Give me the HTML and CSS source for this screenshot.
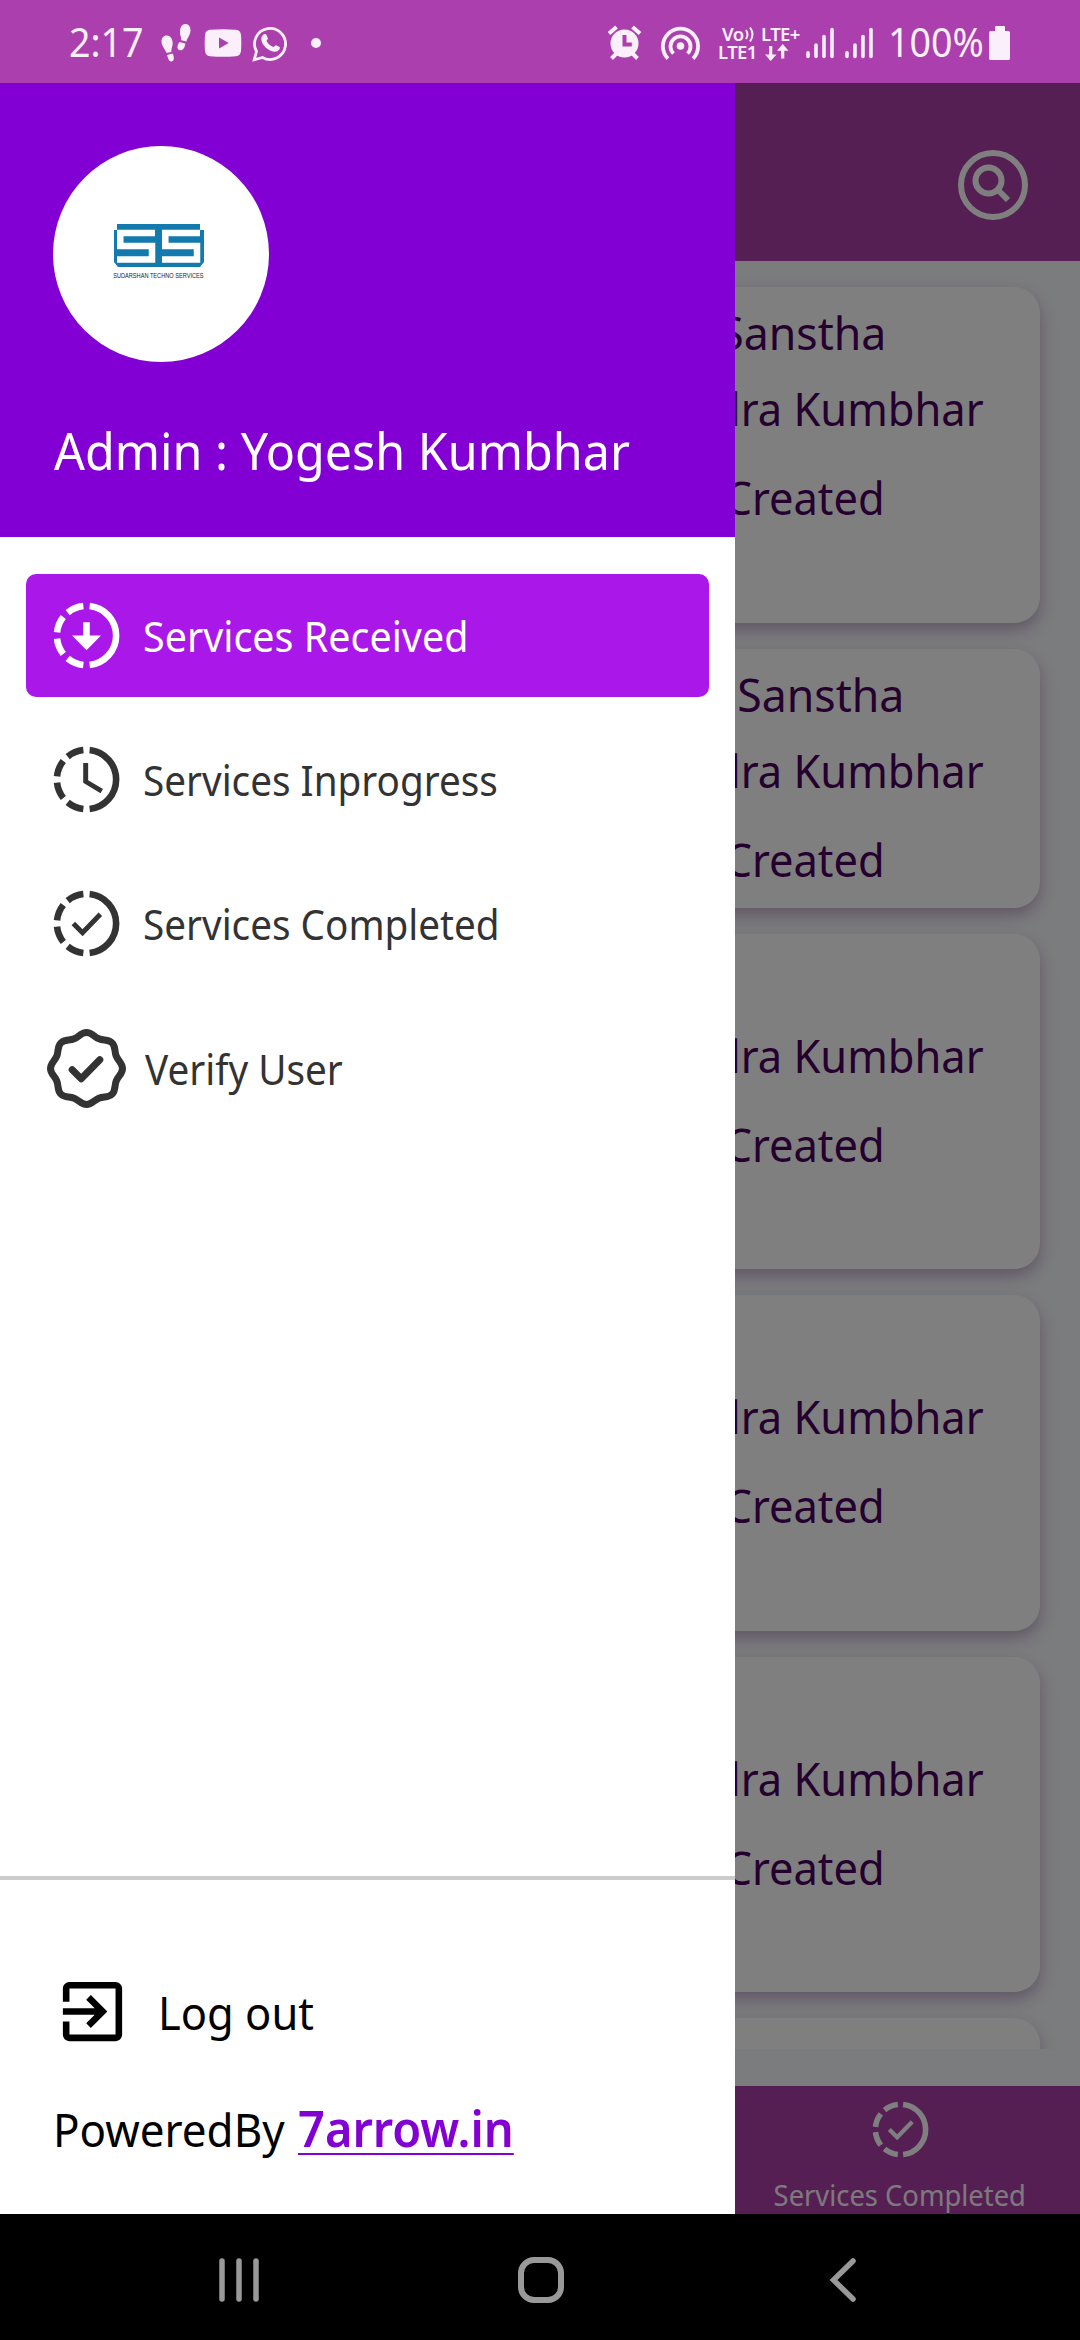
FILE: index.html
```html
<!DOCTYPE html>
<html lang="en">
<head>
<meta charset="utf-8">
<title>Services</title>
<link rel="stylesheet" href="styles.css">
</head>
<body>
<svg class="defs" width="0" height="0">
  <symbol id="ring" viewBox="0 0 24 24">
    <path fill="none" stroke="currentColor" stroke-width="2" d="M12.95 3.05A9 9 0 0 1 12.95 20.95M11.05 3.05A9 9 0 0 0 6.28 5.05M4.95 6.4A9 9 0 0 0 3.05 11.05M3.05 12.95A9 9 0 0 0 4.95 17.6M6.28 18.95A9 9 0 0 0 11.05 20.95"/>
  </symbol>
  <symbol id="done" viewBox="0 0 24 24">
    <use href="#ring"/>
    <path fill="none" stroke="currentColor" stroke-width="1.5" d="M8 12l2.8 2.8L16.2 9.2"/>
  </symbol>
</svg>

<header class="status">
  <span class="clock">2:17</span>
  <svg class="steps" viewBox="0 0 30 40" width="30" height="40" fill="currentColor">
    <path d="M5.500 12.500c4 0 6 3.500 6.200 7.500.1 3.500-1.500 5-1.400 9L5.500 30C4.500 27 .5 23 .5 18.500c0-3.500 2-6 5-6zM6 32l5.500-1.500c1.800 2.500 2 7.500-.8 8C7.800 39 7 35 6 32zM24.500 1c3.500 0 5 3 5 6.500 0 4.500-3.500 7.500-4 11l-5.300-1.300c.3-3.500-1.500-5-1.200-9C19.300 4 21 1 24.500 1zM18.500 19l5.800 1.500c-.3 3.500-2 7-5 6.800-4-.3-3.300-5.300-.8-8.300z"/>
  </svg>
  <svg class="video" viewBox="0 0 38 28" width="38" height="28">
    <path fill="currentColor" fill-rule="evenodd" d="M6 .7Q19-.3 32 .7 36.500 1 37 6q.6 8 0 16-.5 5-5 5.300-13 1-26 0Q1.500 27 1 22 .4 14 1 6 1.500 1 6 .7zM15 8.500v11L24.700 14z"/>
  </svg>
  <svg class="chat" viewBox="0 0 36 38" width="36" height="38">
    <path fill="none" stroke="currentColor" stroke-width="2.800" d="M2.200 35.800l2.300-8.300A15.500 15.500 0 1 1 10.500 33.500z"/>
    <path fill="currentColor" d="M11.500 10.500c1-.8 2.500-.5 3 .5l1.400 3.200c.3.800-1.400 2-1.300 2.700 1.400 3 4 5 6.800 6.100.8 0 2-2 2.700-1.700l3.500 1.700c1.300 1.500-1.500 5-5.100 4.700C15.500 27 9.500 20.500 9.300 15c0-2 1-3.700 2.200-4.500z"/>
  </svg>
  <span class="dot"></span>
  <div class="status-right">
    <svg class="alarm" viewBox="0 0 35 36" width="35" height="36">
      <path stroke="currentColor" stroke-width="4" d="M2 8.500l7.500-6.500M33 8.500L25.500 2M4.500 33.500l6-6M30.500 33.500l-6-6"/>
      <path fill="currentColor" fill-rule="evenodd" d="M17.500 4.500a14 14 0 1 1 0 28 14 14 0 0 1 0-28zM15.500 10v11.500h9.300v-4h-5.300V10z"/>
    </svg>
    <svg class="hotspot" viewBox="0 0 39 36" width="39" height="36" fill="none" stroke="currentColor" stroke-width="3.800">
      <circle cx="19.500" cy="21" r="3.800" fill="currentColor" stroke="none"/>
      <path d="M7 33.700A17.600 17.600 0 1 1 32 33.700M12.500 28.500A10 10 0 1 1 26.500 28.500"/>
    </svg>
    <div class="network">
      <div class="sim">
        <span class="volte">Vo<svg viewBox="0 0 9 18" width="9" height="18" fill="none" stroke="currentColor" stroke-width="2"><path d="M1 5q3 4.500 0 9M5 2.500q5 6.500 0 14"/></svg></span>
        <span>LTE1</span>
      </div>
      <div class="sim">
        <span>LTE+</span>
        <svg class="traffic" viewBox="0 0 24 17" width="24" height="17" fill="currentColor"><path d="M4 2h3.300v8.500h4.200L5.700 17 0 10.500h4zM16 14.500h3.300V6.700h4.200L17.700 0 12 6.700h4z"/></svg>
      </div>
    </div>
    <svg class="signal" viewBox="0 0 28 32" width="28" height="32" stroke="currentColor" stroke-width="3.600" stroke-linecap="round">
      <path d="M2 25.800v3.700M10 18v11.500M18 9.500v20M26 2.500v27"/>
    </svg>
    <svg class="signal second" viewBox="0 0 28 32" width="28" height="32" stroke="currentColor" stroke-width="3.600" stroke-linecap="round">
      <path d="M2 25.800v3.700M10 18v11.500M18 9.500v20M26 2.500v27"/>
    </svg>
    <span class="percent">100%</span>
    <svg class="battery" viewBox="0 0 21 34" width="21" height="34" fill="currentColor">
      <path d="M7 0h8q1 0 1 1v4h3.500Q21 5 21 6.500v26q0 1.500-1.500 1.500h-18Q0 34 0 32.500v-26Q0 5 1.500 5H6V1q0-1 1-1z"/>
    </svg>
  </div>
</header>

<main class="stage">
  <section class="app">
    <div class="appbar">
      <svg viewBox="0 0 70 70" width="70" height="70" fill="none" stroke="currentColor" stroke-width="6">
        <circle cx="35" cy="35" r="32"/>
        <circle cx="30.500" cy="30.500" r="13"/>
        <path d="M39.500 39.500l10.500 10.500"/>
      </svg>
    </div>
    <div class="list">
      <article class="card">
        <p class="org">Sanstha</p><p class="name">dra Kumbhar</p><p class="state">Created</p>
      </article>
      <article class="card short">
        <p class="org wide">Sanstha</p><p class="name">dra Kumbhar</p><p class="state">Created</p>
      </article>
      <article class="card">
        <p class="org"></p><p class="name">dra Kumbhar</p><p class="state">Created</p>
      </article>
      <article class="card">
        <p class="org"></p><p class="name">dra Kumbhar</p><p class="state">Created</p>
      </article>
      <article class="card">
        <p class="org"></p><p class="name">dra Kumbhar</p><p class="state">Created</p>
      </article>
      <article class="card"></article>
    </div>
    <nav class="tabs">
      <div class="tab">
        <svg width="67" height="67"><use href="#done"/></svg>
        <span>Services Completed</span>
      </div>
    </nav>
  </section>
  <div class="scrim"></div>

  <aside class="drawer">
    <div class="profile">
      <div class="avatar">
        <svg viewBox="0 0 90 43" width="90" height="43">
          <path fill="#137aad" d="M3 0h83v6h4v32l-4 5H4l-4-5V6h3z"/>
          <path fill="none" stroke="#fff" stroke-width="6.500" d="M41 9H6.300v13H38v13.500H3M86 9H51.300v13H83v13.500H48"/>
        </svg>
        <span class="brand">SUDARSHAN TECHNO SERVICES</span>
      </div>
      <h1 class="who">Admin : Yogesh Kumbhar</h1>
    </div>
    <ul class="menu">
      <li class="item active">
        <svg viewBox="0 0 24 24" width="79" height="79"><use href="#ring"/><path fill="currentColor" d="M11 8h2v4h3.400L12 16.500 7.600 12H11z"/></svg>
        <span class="received">Services Received</span>
      </li>
      <li class="item">
        <svg viewBox="0 0 24 24" width="79" height="79"><use href="#ring"/><path fill="currentColor" d="M12.500 7H11v6l5.250 3.150.75-1.230-4.500-2.670z"/></svg>
        <span>Services Inprogress</span>
      </li>
      <li class="item">
        <svg width="79" height="79"><use href="#done"/></svg>
        <span>Services Completed</span>
      </li>
      <li class="item verify">
        <svg viewBox="-39.500 -39.500 79 79" width="79" height="79" fill="none" stroke="currentColor" stroke-width="7">
          <path d="M0-36C5.500-36 7.240-31.850 12.320-29.750S21.710-29.490 25.600-25.600S27.650-17.400 29.750-12.320S36 -5.500 36 0S31.850 7.240 29.750 12.320S29.490 21.710 25.600 25.600S17.400 27.650 12.320 29.750S5.500 36 0 36S-7.240 31.850-12.320 29.750S-21.710 29.490-25.600 25.600S-27.650 17.400-29.750 12.320S-36 5.500-36 0S-31.850-7.240-29.750-12.320S-29.490-21.710-25.600-25.600S-17.400-27.650-12.320-29.750S-5.500-36 0-36z"/>
          <path stroke-linecap="round" stroke-linejoin="round" d="M-14.300 1.300l9 9L13.300-8.700"/>
        </svg>
        <span>Verify User</span>
      </li>
    </ul>
    <div class="foot">
      <div class="logout">
        <svg viewBox="0 0 24 24" width="79" height="79" fill="currentColor"><path d="M10.090 15.590L11.500 17l5-5-5-5-1.410 1.410L12.670 11H3v2h9.670l-2.580 2.590zM19 3H5c-1.110 0-2 .9-2 2v4h2V5h14v14H5v-4H3v4c0 1.100.89 2 2 2h14c1.100 0 2-.9 2-2V5c0-1.100-.9-2-2-2z"/></svg>
        <span>Log out</span>
      </div>
      <div class="powered"><span class="by">PoweredBy</span><a class="link">7arrow.in</a></div>
    </div>
  </aside>
</main>

<footer class="sysnav">
  <svg viewBox="0 0 44 44" width="44" height="44" stroke="currentColor" stroke-width="5.500" stroke-linecap="round"><path d="M5 3v38M22 3v38M39 3v38"/></svg>
  <svg viewBox="0 0 48 48" width="48" height="48" fill="none" stroke="currentColor" stroke-width="6"><rect x="4" y="4" width="40" height="40" rx="13"/></svg>
  <svg viewBox="0 0 30 44" width="30" height="44" fill="none" stroke="currentColor" stroke-width="5.500" stroke-linecap="round"><path d="M25 3L5.500 22 25 41"/></svg>
</footer>
</body>
</html>
```
FILE: styles.css
```css
* { box-sizing: border-box; margin: 0; padding: 0; }
body {
  width: 1080px;
  height: 2340px;
  overflow: hidden;
  display: flex;
  flex-direction: column;
  font-family: "Noto Sans", "Open Sans", sans-serif;
}
svg { display: block; flex: none; }
.defs { position: absolute; }
span, p, h1, a { white-space: nowrap; }

.status {
  height: 83px;
  flex: none;
  display: flex;
  align-items: center;
  padding: 2px 70px 0 69px;
  background: #ab3fad;
  color: #faeffb;
}
.clock {
  width: 80px;
  font-size: 40px;
  line-height: 58px;
  padding-bottom: 2px;
  transform: scaleX(.94);
  transform-origin: left;
}
.steps { margin-left: 12px; }
.video { margin-left: 13px; }
.chat { margin-left: 10px; }
.dot { width: 10px; height: 10px; margin-left: 23px; border-radius: 50%; background: currentColor; }
.status-right { margin-left: auto; display: flex; align-items: center; }
.hotspot { margin-left: 19px; }
.network {
  width: 82px;
  margin-left: 18px;
  display: flex;
  gap: 4px;
  font-size: 18.5px;
  font-weight: 600;
  line-height: 18px;
  letter-spacing: -.6px;
}
.sim { width: 39px; display: flex; flex-direction: column; }
.volte { display: flex; gap: 1px; padding-left: 4px; }
.traffic { margin: 1px 0 0 4px; }
.signal { margin-left: 6px; }
.signal.second { margin-left: 11px; }
.percent {
  width: 94px;
  margin-left: 15px;
  font-size: 40px;
  line-height: 58px;
  padding-bottom: 2px;
  transform: scaleX(.94);
  transform-origin: left;
}
.battery { margin-left: 7px; }

.stage { position: relative; flex: none; height: 2131px; overflow: hidden; }
.app { height: 100%; display: flex; flex-direction: column; background: #f7f8fc; }
.appbar {
  height: 178px;
  flex: none;
  display: flex;
  justify-content: flex-end;
  padding: 67px 52px 0 0;
  background: #ac3fa8;
  color: #fff;
}
.list {
  height: 1788px;
  flex: none;
  overflow: hidden;
  display: flex;
  flex-direction: column;
  gap: 26px;
  padding: 26px 40px 0;
}
.card {
  height: 335.5px;
  flex: none;
  display: flex;
  flex-direction: column;
  align-items: flex-end;
  padding-right: 56px;
  border-radius: 26px;
  background: #fff;
  box-shadow: 0 7px 16px rgba(80, 20, 100, .32);
  color: #4a005e;
  font-size: 46px;
}
.card.short { height: 259px; }
.card p { transform: scaleX(.944); transform-origin: right; }
.card .org { height: 90px; line-height: 90px; margin-right: 98px; transform: scaleX(.97); }
.card .wide { margin-right: 80px; }
.name { line-height: 62px; }
.state { margin: 26px 99px 0 0; line-height: 64px; }
.tabs {
  height: 128px;
  margin-top: auto;
  flex: none;
  display: flex;
  justify-content: flex-end;
  background: #ac3fa8;
  color: #fff;
}
.tab {
  width: 360px;
  display: flex;
  flex-direction: column;
  align-items: center;
  padding-top: 10px;
  font-size: 29px;
  line-height: 40px;
}
.tab span { margin-top: 12px; opacity: .94; transform: scaleX(.943); }
.scrim { position: absolute; inset: 0; background: rgba(0, 0, 0, .5); }

.drawer {
  position: absolute;
  inset: 0 auto 0 0;
  width: 735px;
  display: flex;
  flex-direction: column;
  background: #fff;
}
.profile { height: 454px; flex: none; padding: 63px 0 0 53px; background: #8200d3; color: #fff; }
.avatar {
  width: 216px;
  height: 216px;
  display: flex;
  flex-direction: column;
  align-items: center;
  padding: 78px 5px 0 0;
  border-radius: 50%;
  background: #fff;
}
.brand {
  margin-top: 5px;
  color: #222;
  font: 6.4px/7px "Liberation Sans", sans-serif;
  transform: scaleX(.88);
}
.who {
  margin-top: 56px;
  padding-left: 1px;
  font-size: 51px;
  font-weight: 400;
  line-height: 64px;
  transform: scaleX(.95);
  transform-origin: left;
}
.menu { list-style: none; display: flex; flex-direction: column; gap: 21px; padding: 37px 26px 0; }
.item {
  height: 123px;
  display: flex;
  align-items: center;
  gap: 17px;
  padding-left: 21px;
  border-radius: 10px;
  color: #333;
  font-size: 41px;
}
.item span { transform: scaleX(.943); transform-origin: left; }
.item.active { background: #a918e8; color: #fff; }
.item .received { transform: scaleX(.962); }
.verify { padding-top: 2px; gap: 19px; }
.foot { height: 338px; margin-top: auto; padding: 92px 0 0 53px; border-top: 4px solid #ccc; }
.logout { display: flex; align-items: center; gap: 26px; font-size: 46px; }
.logout span { transform: scaleX(.945); transform-origin: left; }
.powered { display: flex; align-items: baseline; margin-top: 44px; line-height: 64px; }
.by { width: 245px; font-size: 46px; transform: scaleX(.955); transform-origin: left; }
.link {
  color: #8200d3;
  font-size: 51px;
  font-weight: 600;
  text-decoration: underline;
  text-decoration-thickness: 2px;
  text-underline-offset: 6px;
  transform: scaleX(.922);
  transform-origin: left;
}

.sysnav {
  flex: 1;
  display: flex;
  align-items: center;
  padding: 5px 0 0 217px;
  background: #000;
  color: #999;
}
.sysnav svg:nth-child(2) { margin-left: 256px; }
.sysnav svg:nth-child(3) { margin-left: 263px; }
```
